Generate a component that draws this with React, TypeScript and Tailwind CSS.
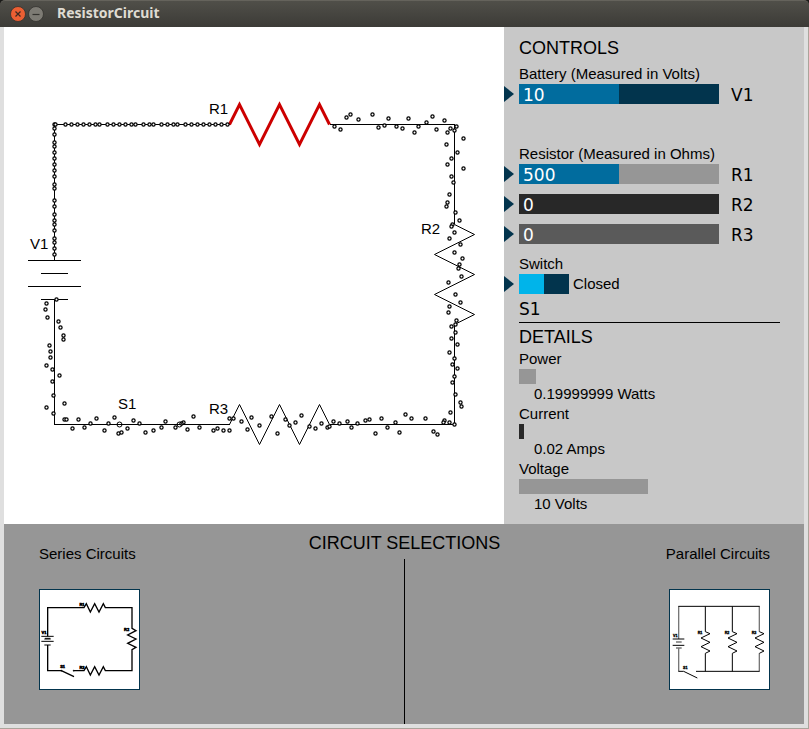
import { useState, type ReactNode } from "react";

type Point = [number, number];

const leftWire = [124, 128, 134, 142, 146, 152, 158, 164, 170, 176, 184, 188, 200, 206, 214, 220, 224, 230, 238, 242, 248, 254];
const topWire = [55, 65, 71, 77, 83, 89, 95, 99, 107, 113, 119, 125, 131, 135, 143, 149, 153, 161, 167, 173, 177, 185, 191, 197, 203, 209, 215, 221, 227];

const scattered: Point[] = [
  [334, 126], [340, 129], [346, 117], [350, 114], [358, 119], [372, 114], [378, 127], [384, 125], [388, 118],
  [396, 126], [402, 128], [408, 118], [414, 132], [418, 126], [426, 122], [432, 116], [436, 129], [444, 120],
  [447, 132], [450, 128], [454, 130], [456, 126], [446, 144], [463, 138], [457, 152], [451, 158], [447, 164],
  [463, 168], [451, 176], [453, 182], [449, 194], [447, 202], [446, 206], [455, 212], [459, 220], [452, 224],
  [451, 226], [454, 232], [449, 238], [460, 244], [454, 252], [462, 258], [459, 264], [458, 268], [461, 276],
  [448, 282], [455, 294], [460, 302], [449, 306], [448, 312], [456, 320], [455, 324], [451, 326], [455, 332],
  [451, 338], [457, 344], [449, 352], [454, 358], [452, 364], [457, 368], [454, 376], [452, 382], [455, 394],
  [460, 402], [461, 406], [450, 412], [449, 422], [454, 424], [444, 420], [443, 422],
  [56, 299], [46, 303], [45, 309], [47, 317], [58, 321], [60, 327], [63, 335], [63, 339], [49, 345], [50, 351],
  [50, 357], [46, 365], [52, 369], [59, 375], [52, 381], [53, 395], [64, 403], [46, 407], [53, 413], [64, 419],
  [66, 419], [72, 428], [78, 419], [84, 427], [90, 423], [96, 418], [104, 430], [108, 423], [114, 417],
  [118, 433], [121, 432], [127, 428], [133, 420], [139, 423], [145, 432], [153, 430], [161, 427], [165, 421],
  [175, 427], [183, 422], [181, 423], [187, 429], [193, 416], [199, 427], [213, 430], [217, 428], [223, 430],
  [229, 430], [229, 418], [233, 418],
  [241, 421], [247, 429], [251, 417], [259, 425], [271, 416], [277, 433], [285, 419], [289, 425], [295, 422],
  [301, 415], [309, 426], [315, 428], [321, 423], [327, 427], [329, 426], [333, 421], [339, 423], [347, 421],
  [351, 427], [357, 423], [365, 420], [369, 419], [375, 433], [381, 418], [387, 427], [395, 422], [399, 432],
  [405, 414], [411, 418], [425, 418], [433, 431], [437, 434],
];

const electrons: Point[] = [
  ...leftWire.map((y): Point => [54, y]),
  ...topWire.map((x): Point => [x, 124]),
  ...scattered,
];

function Circuit() {
  return (
    <svg viewBox="4 27 500 497" className="block w-full" role="img" aria-label="Series circuit">
      <g stroke="#000" fill="none" shapeRendering="crispEdges">
        <path d="M54.5 260V124.5H230M330 124.5H454.5V224M454.5 324V424.5H330M230 424.5H54.5V299" />
        <path d="M28 260.5H81M41 273.5H68M28 286.5H81M41 299.5H68" />
      </g>
      <g stroke="#000" fill="none">
        <path d="M454.5 224.5L474.5 234.5L434.5 254.5L474.5 274.5L434.5 294.5L474.5 314.5L454.5 324.5" />
        <path d="M229.5 424.5L239.5 404.5L259.5 444.5L279.5 404.5L299.5 444.5L319.5 404.5L329.5 424.5" />
      </g>
      <path
        d="M229.5 124.5L239.5 104.5L259.5 144.5L279.5 104.5L299.5 144.5L319.5 104.5L329.5 124.5"
        stroke="#cc0000"
        strokeWidth="3"
        fill="none"
      />
      <g stroke="#000" strokeWidth="1.25" fill="#fff">
        {electrons.map(([x, y], i) => (
          <circle key={i} cx={x + 0.5} cy={y + 0.5} r="1.6" />
        ))}
      </g>
      <g stroke="#000" fill="none">
        <circle cx="119.5" cy="424.5" r="2.5" />
        <circle cx="179.5" cy="424.5" r="2.5" />
      </g>
      <g fontSize="15" fill="#000">
        <text x="209" y="114">R1</text>
        <text x="421" y="234">R2</text>
        <text x="209" y="414">R3</text>
        <text x="30" y="249">V1</text>
        <text x="118" y="409">S1</text>
      </g>
    </svg>
  );
}

function Marker() {
  return (
    <svg width="10" height="18" viewBox="0 0 10 18" className="shrink-0" aria-hidden="true">
      <path d="M0 1L10 9L0 17Z" fill="#02344d" />
    </svg>
  );
}

function SliderRow({ id, initial, max, fill, track }: { id: string; initial: number; max: number; fill: string; track: string }) {
  const [value, setValue] = useState(initial);
  return (
    <div className="flex h-5 items-center">
      <Marker />
      <div className={`ml-[5px] grid h-5 w-[200px] ${track}`}>
        <div className={`col-start-1 row-start-1 h-5 ${fill}`} style={{ width: `${(value / max) * 100}%` }} />
        <output className="col-start-1 row-start-1 pt-px pl-1 font-['DejaVu_Sans',sans-serif] text-[17px] leading-5 text-white">{value}</output>
        <input
          id={id}
          type="range"
          min={0}
          max={max}
          value={value}
          onChange={(e) => setValue(Number(e.target.value))}
          className="col-start-1 row-start-1 h-5 w-full cursor-pointer appearance-none opacity-0"
        />
      </div>
      <label htmlFor={id} className="ml-3 pt-px font-['DejaVu_Sans',sans-serif] text-[17px] leading-5">{id}</label>
    </div>
  );
}

function Reading({ name, value, bar }: { name: string; value: string; bar: string }) {
  return (
    <div>
      <dt className="leading-5">{name}</dt>
      <dd>
        <div className={`h-[15px] ${bar}`} />
        <p className="pl-[15px] leading-5">{value}</p>
      </dd>
    </div>
  );
}

function SwitchControl() {
  const [closed, setClosed] = useState(true);
  return (
    <div className="flex h-5 items-center">
      <Marker />
      <button
        type="button"
        role="switch"
        aria-checked={closed}
        aria-labelledby="switch-label"
        onClick={() => setClosed(!closed)}
        className="ml-[5px] flex h-5 w-[50px] bg-[#02344d]"
      >
        <span className={`h-5 w-[25px] bg-[#00b4ea] ${closed ? "" : "ml-auto"}`} />
      </button>
      <span className="ml-1 leading-5">{closed ? "Closed" : "Open"}</span>
    </div>
  );
}

function Thumb({ label, viewBox, children }: { label: string; viewBox: string; children: ReactNode }) {
  return (
    <button type="button" aria-label={label} className="mt-[25px] size-[101px] shrink-0 cursor-pointer border border-[#02344d] bg-white">
      <svg viewBox={viewBox} className="block size-full" fill="none" stroke="#000">
        {children}
      </svg>
    </button>
  );
}

function SeriesDrawing() {
  return (
    <>
      <path
        strokeWidth="4"
        d="M143 349V263H252L259 251L271 276L284 251L297 276L310 251L316 263H396V325L408 332L383 345L408 357L383 370L408 382L396 389V452H316L310 440L297 465L284 440L271 465L259 440L252 452H221M184 452H143V375M184 452L222 470"
      />
      <path strokeWidth="3" d="M124 349H161M133 357H152M124 364H161M133 375H152" />
      <path strokeWidth="3" d="M135 355H151" />
      <circle cx="221" cy="452" r="2" fill="#000" />
      <circle cx="184" cy="452" r="2" fill="#000" />
      <g fill="#000" strokeWidth="1.5" fontSize="12" fontWeight="bold" textAnchor="middle">
        <text x="246" y="258">R1</text>
        <text x="246" y="447">R3</text>
        <text x="380" y="333">R2</text>
        <text x="132" y="342">V1</text>
        <text x="188" y="444">S1</text>
      </g>
    </>
  );
}

function ParallelDrawing() {
  return (
    <>
      <path strokeWidth="4" stroke="#777" d="M116 259V357M116 384V454M358 259V335M358 400V454" />
      <path strokeWidth="3" d="M115 259H359M196 259V335M277 259V335M196 400V454M277 400V454M168 454H359M115 454H131L172 474" />
      <path strokeWidth="3" d="M98 357H133M98 376H133" />
      <path strokeWidth="4" stroke="#777" d="M108 366H125M108 384H125" />
      {[196, 277, 358].map((x) => (
        <path
          key={x}
          strokeWidth="3"
          d={`M${x} 335L${x + 14} 341L${x - 13} 354L${x + 14} 367L${x - 13} 380L${x + 14} 393L${x} 400`}
        />
      ))}
      <g fill="#000" strokeWidth="1" fontSize="11" fontWeight="bold" textAnchor="middle">
        <text x="180" y="342">R1</text>
        <text x="261" y="342">R2</text>
        <text x="342" y="342">R3</text>
        <text x="106" y="351">V1</text>
        <text x="136" y="446">S1</text>
      </g>
    </>
  );
}

function TitleBar() {
  return (
    <header className="flex h-[27px] shrink-0 items-center rounded-t-[5px] border-t border-[#65635c] bg-linear-to-b from-[#504f49] to-[#3c3b37] pl-[10px]">
      <button type="button" aria-label="Close" className="size-4">
        <svg viewBox="0 0 16 16" className="block size-4">
          <circle cx="8" cy="8" r="7.5" fill="#ec5f33" stroke="#33322e" strokeWidth="0.8" />
          <path d="M5.5 5.5L10.5 10.5M10.5 5.5L5.5 10.5" stroke="#3c2a22" strokeWidth="1.2" />
        </svg>
      </button>
      <button type="button" aria-label="Minimize" className="ml-[2px] size-4">
        <svg viewBox="0 0 16 16" className="block size-4">
          <circle cx="8" cy="8" r="7.5" fill="#7d7b74" stroke="#33322e" strokeWidth="0.8" />
          <path d="M4.5 8.5H11.5" stroke="#34332f" strokeWidth="1.2" />
        </svg>
      </button>
      <h1 className="ml-[13px] pb-[2px] font-['Noto_Sans',sans-serif] text-[14px] leading-5 font-bold text-[#dfdbd2]">ResistorCircuit</h1>
    </header>
  );
}

export default function App() {
  return (
    <div className="flex min-h-screen flex-col bg-[#1a1a18] font-['Liberation_Sans',Arial,sans-serif] text-[15px] text-black">
      <TitleBar />
      <div className="flex flex-1 flex-col border-r border-b border-[#aaa49b] bg-[#dfdfdf] px-1 pb-1">
        <main className="flex flex-1">
          <section className="flex-5 bg-white">
            <Circuit />
          </section>
          <section className="flex-3 bg-[#c8c8c8] pt-[9px]">
            <h2 className="pl-[15px] text-[18px] leading-6">CONTROLS</h2>
            <p className="mt-1 pl-[15px] leading-5">Battery (Measured in Volts)</p>
            <SliderRow id="V1" initial={10} max={20} fill="bg-[#016c9e]" track="bg-[#02344d]" />
            <p className="mt-10 pl-[15px] leading-5">Resistor (Measured in Ohms)</p>
            <div className="flex flex-col gap-[10px]">
              <SliderRow id="R1" initial={500} max={1000} fill="bg-[#016c9e]" track="bg-[#969696]" />
              <SliderRow id="R2" initial={0} max={1000} fill="bg-[#016c9e]" track="bg-[#282828]" />
              <SliderRow id="R3" initial={0} max={1000} fill="bg-[#016c9e]" track="bg-[#5a5a5a]" />
            </div>
            <p id="switch-label" className="mt-[10px] pl-[15px] leading-5">Switch</p>
            <SwitchControl />
            <div className="mr-6 ml-[15px]">
              <p className="border-b border-black pt-[5px] pb-[3px] font-['DejaVu_Sans',sans-serif] text-[17px] leading-5">S1</p>
              <h2 className="pt-[3px] text-[18px] leading-[23px]">DETAILS</h2>
              <dl>
                <Reading name="Power" value="0.19999999 Watts" bar="w-[17px] bg-[#969696]" />
                <Reading name="Current" value="0.02 Amps" bar="w-[5px] bg-[#282828]" />
                <Reading name="Voltage" value="10 Volts" bar="w-[129px] bg-[#969696]" />
              </dl>
            </div>
          </section>
        </main>
        <footer className="flex h-[200px] shrink-0 bg-[#969696] pr-[34px] pl-[35px]">
          <div className="flex w-[105px] flex-col items-start pt-5">
            <h3 className="leading-5 whitespace-nowrap">Series Circuits</h3>
            <Thumb label="Series Circuits" viewBox="120 210 297 297">
              <SeriesDrawing />
            </Thumb>
          </div>
          <div className="flex flex-1 flex-col items-center pt-[7px]">
            <h2 className="text-[18px] leading-6">CIRCUIT SELECTIONS</h2>
            <div className="mt-1 w-px flex-1 bg-black" />
          </div>
          <div className="flex w-[105px] flex-col items-end pt-5">
            <h3 className="leading-5 whitespace-nowrap">Parallel Circuits</h3>
            <Thumb label="Parallel Circuits" viewBox="90 210 297 297">
              <ParallelDrawing />
            </Thumb>
          </div>
        </footer>
      </div>
    </div>
  );
}
